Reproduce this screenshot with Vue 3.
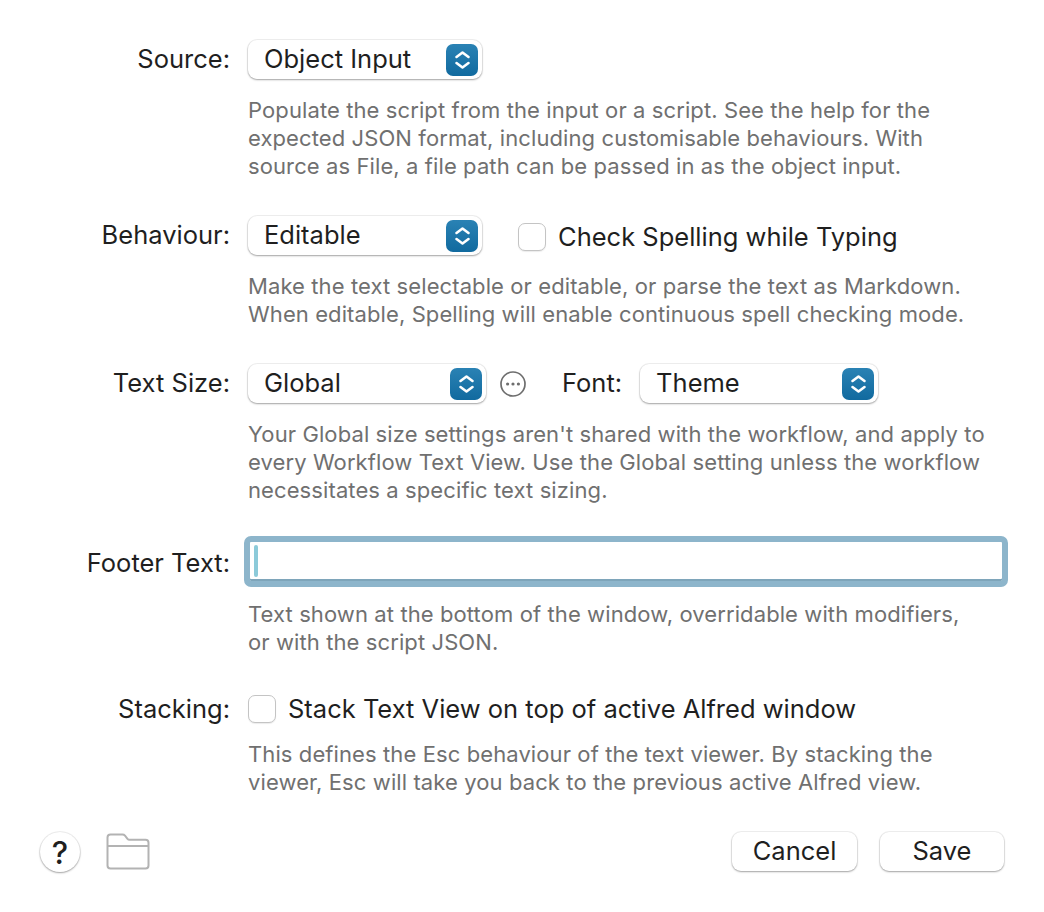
<script setup>
const selectChevron = 'M4.5 9 10.5 4.5 16.5 9M4.5 15 10.5 19.5 16.5 15'
</script>

<template>
  <div class="sheet">
    <section class="row">
      <label class="label">Source:</label>
      <div class="controls">
        <div class="select select-source">
          <span>Object Input</span>
          <span class="stepper">
            <svg width="21" height="24" viewBox="0 0 21 24"><path :d="selectChevron" /></svg>
          </span>
        </div>
      </div>
      <p class="help">
        Populate the script from the input or a script. See the help for the<br />
        expected JSON format, including customisable behaviours. With<br />
        source as File, a file path can be passed in as the object input.
      </p>
    </section>

    <section class="row">
      <label class="label">Behaviour:</label>
      <div class="controls">
        <div class="select select-source">
          <span>Editable</span>
          <span class="stepper">
            <svg width="21" height="24" viewBox="0 0 21 24"><path :d="selectChevron" /></svg>
          </span>
        </div>
        <span class="checkbox spelling-box"></span>
        <span class="check-text">Check Spelling while Typing</span>
      </div>
      <p class="help">
        Make the text selectable or editable, or parse the text as Markdown.<br />
        When editable, Spelling will enable continuous spell checking mode.
      </p>
    </section>

    <section class="row">
      <label class="label">Text Size:</label>
      <div class="controls">
        <div class="select select-size">
          <span>Global</span>
          <span class="stepper">
            <svg width="21" height="24" viewBox="0 0 21 24"><path :d="selectChevron" /></svg>
          </span>
        </div>
        <svg class="more" width="28" height="28" viewBox="0 0 28 28">
          <circle cx="14" cy="14" r="12" fill="none" stroke="#6e6e6e" stroke-width="1.7" />
          <circle cx="8.6" cy="14" r="1.6" fill="#6e6e6e" />
          <circle cx="14" cy="14" r="1.6" fill="#6e6e6e" />
          <circle cx="19.4" cy="14" r="1.6" fill="#6e6e6e" />
        </svg>
        <span class="font-label">Font:</span>
        <div class="select select-font">
          <span>Theme</span>
          <span class="stepper">
            <svg width="21" height="24" viewBox="0 0 21 24"><path :d="selectChevron" /></svg>
          </span>
        </div>
      </div>
      <p class="help">
        Your Global size settings aren't shared with the workflow, and apply to<br />
        every Workflow Text View. Use the Global setting unless the workflow<br />
        necessitates a specific text sizing.
      </p>
    </section>

    <section class="row row-footer">
      <label class="label label-footer">Footer Text:</label>
      <div class="text-field"><span class="caret"></span></div>
      <p class="help help-footer">
        Text shown at the bottom of the window, overridable with modifiers,<br />
        or with the script JSON.
      </p>
    </section>

    <section class="row">
      <label class="label label-stack">Stacking:</label>
      <div class="controls">
        <span class="checkbox"></span>
        <span class="check-text stack-text">Stack Text View on top of active Alfred window</span>
      </div>
      <p class="help help-stack">
        This defines the Esc behaviour of the text viewer. By stacking the<br />
        viewer, Esc will take you back to the previous active Alfred view.
      </p>
    </section>

    <footer class="actions">
      <button class="help-btn">?</button>
      <svg class="folder" width="44" height="38" viewBox="0 0 44 38">
        <path
          d="M1.5 5.5Q1.5 2.5 4.5 2.5H16.5Q18 2.5 19 3.6L21.5 6.8Q22.3 7.8 23.6 7.8H39.5Q42.5 7.8 42.5 10.8V33.5Q42.5 36.5 39.5 36.5H4.5Q1.5 36.5 1.5 33.5ZM1.5 14H42.5"
          fill="none"
          stroke="#b3b3b3"
          stroke-width="2"
        />
      </svg>
      <button class="btn btn-cancel">Cancel</button>
      <button class="btn btn-save">Save</button>
    </footer>
  </div>
</template>

<style scoped>
.sheet {
  width: 1044px;
  height: 912px;
  box-sizing: border-box;
  padding-top: 40px;
  background: #fff;
  font-family: Inter, "Liberation Sans", sans-serif;
  color: #1f1f1f;
  overflow: hidden;
}

.row {
  display: grid;
  grid-template-columns: 230px 1fr;
  column-gap: 18px;
  margin-bottom: 36px;
}

.label {
  align-self: center;
  text-align: right;
  font-size: 25.5px;
  line-height: 37px;
  padding-bottom: 2px;
  white-space: nowrap;
}

.label-footer {
  padding-bottom: 0;
  padding-top: 2px;
}

.label-stack {
  padding-bottom: 0;
}

.controls {
  display: flex;
  align-items: center;
  height: 39px;
}

.help {
  grid-column: 2;
  margin: 17px 0 0;
  font-size: 22px;
  letter-spacing: 0.1px;
  line-height: 28px;
  color: #707070;
  white-space: nowrap;
}

.select {
  flex: none;
  box-sizing: border-box;
  height: 39px;
  display: flex;
  align-items: center;
  justify-content: space-between;
  padding: 0 4px 0 16px;
  background: #fff;
  border-radius: 9px;
  box-shadow: 0 0 0 1px rgba(0, 0, 0, 0.06), 0 1px 2px rgba(0, 0, 0, 0.32);
  font-size: 25.5px;
  line-height: 37px;
}

.select > span:first-child {
  padding-bottom: 2px;
}

.select-source {
  width: 234px;
}

.select-size {
  width: 238px;
}

.select-font {
  width: 238px;
}

.stepper {
  width: 32px;
  height: 32px;
  display: flex;
  align-items: center;
  justify-content: center;
  border-radius: 7px;
  background: linear-gradient(#2a82b4, #116a9f);
}

.stepper path {
  fill: none;
  stroke: #fff;
  stroke-width: 2.6;
  stroke-linecap: round;
  stroke-linejoin: round;
}

.checkbox {
  flex: none;
  box-sizing: border-box;
  width: 28px;
  height: 28px;
  border: 1px solid #c4c4c4;
  border-radius: 7px;
  background: #fff;
  box-shadow: 0 1px 1px rgba(0, 0, 0, 0.08);
}

.spelling-box {
  margin: 3px 12px 0 36px;
}

.check-text {
  font-size: 25.5px;
  margin-top: 1px;
}

.stack-text {
  margin: 0 0 0 12px;
}

.more {
  flex: none;
  margin-left: 13px;
}

.font-label {
  margin-left: 35px;
  margin-right: 18px;
  font-size: 25.5px;
  padding-bottom: 2px;
}

.row-footer {
  margin-top: -4px;
  margin-bottom: 33px;
}

.text-field {
  height: 51px;
  box-sizing: border-box;
  width: 764px;
  margin-left: -4px;
  padding: 3px 4px;
  border: 6px solid #8db5cb;
  border-radius: 7px;
  background: #fff;
  box-shadow: inset 0 -2px 0 #7ea5ba;
}

.caret {
  display: block;
  width: 4px;
  height: 32px;
  border-radius: 2px;
  background: #8ccad9;
}

.help-footer {
  margin-top: 13px;
}

.help-stack {
  margin-top: 12px;
}

.actions {
  display: flex;
  align-items: flex-start;
  height: 40px;
  padding-left: 40px;
}

.help-btn {
  flex: none;
  width: 40px;
  height: 40px;
  padding: 0;
  border: 0;
  border-radius: 50%;
  background: #fff;
  box-shadow: 0 0 0 1px rgba(0, 0, 0, 0.06), 0 1px 2px rgba(0, 0, 0, 0.32);
  font-family: inherit;
  font-size: 31px;
  font-weight: 500;
  color: #1f1f1f;
}

.folder {
  flex: none;
  margin-left: 26px;
}

.btn {
  flex: none;
  height: 39px;
  padding: 0 0 2px;
  border: 0;
  border-radius: 9px;
  background: #fff;
  box-shadow: 0 0 0 1px rgba(0, 0, 0, 0.06), 0 1px 2px rgba(0, 0, 0, 0.32);
  font-family: inherit;
  font-size: 25.5px;
  color: #1f1f1f;
}

.btn-cancel {
  width: 125px;
  margin-left: auto;
}

.btn-save {
  width: 124px;
  margin-left: 23px;
  margin-right: 40px;
}
</style>
